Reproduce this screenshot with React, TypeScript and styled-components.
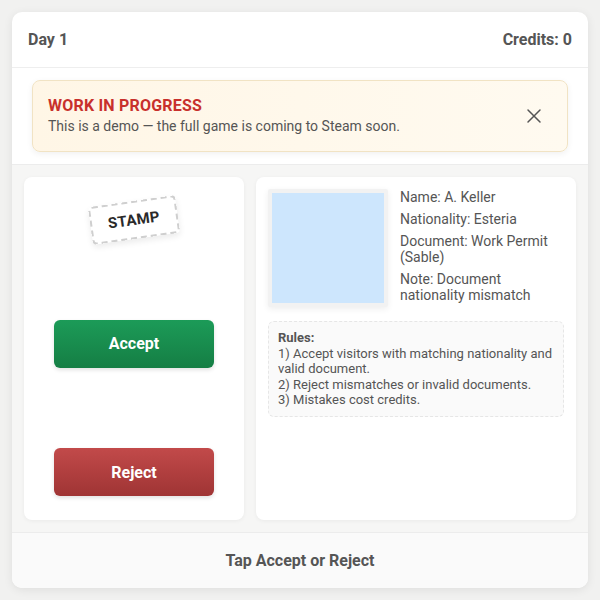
import React from "react";
import styled, { createGlobalStyle } from "styled-components";

const GlobalStyle = createGlobalStyle`
  html, body {
    margin: 0;
    padding: 0;
    background: #f1f1f0;
    font-family: Roboto, "Liberation Sans", Arial, sans-serif;
    color: #555;
  }
  * {
    box-sizing: border-box;
  }
`;

const Page = styled.div`
  width: 600px;
  height: 600px;
  padding: 12px;
`;

const Card = styled.div`
  height: 576px;
  display: flex;
  flex-direction: column;
  background: #fff;
  border-radius: 10px;
  box-shadow: 0 2px 10px rgba(0, 0, 0, 0.08);
  overflow: hidden;
`;

const Header = styled.header`
  height: 56px;
  padding: 0 16px;
  display: flex;
  align-items: center;
  justify-content: space-between;
  border-bottom: 1px solid #eeeeee;
  font-size: 16px;
  font-weight: 700;
  color: #555;
`;

const NoticeArea = styled.div`
  padding: 12px 20px;
  border-bottom: 1px solid #ececec;
`;

const Banner = styled.div`
  display: flex;
  align-items: center;
  justify-content: space-between;
  padding: 15px 25px 15px 15px;
  background: linear-gradient(90deg, #fff6e6, #fffaf0);
  border: 1px solid #f1e3c4;
  border-radius: 8px;
  box-shadow: 0 2px 6px rgba(0, 0, 0, 0.06);
`;

const BannerTitle = styled.div`
  font-size: 16px;
  font-weight: 700;
  color: #c8302c;
  letter-spacing: 0.2px;
  line-height: 20px;
`;

const BannerText = styled.div`
  font-size: 14px;
  line-height: 20px;
  color: #555;
`;

const CloseButton = styled.button`
  border: none;
  background: none;
  padding: 0;
  display: flex;
  cursor: pointer;
`;

const Main = styled.main`
  flex: 1;
  display: grid;
  grid-template-columns: 220px 1fr;
  gap: 12px;
  padding: 12px;
  background: #f6f6f5;
`;

const Panel = styled.section`
  background: #fff;
  border-radius: 8px;
  box-shadow: 0 1px 4px rgba(0, 0, 0, 0.05);
`;

const ActionPanel = styled(Panel)`
  padding: 24px 30px;
  display: flex;
  flex-direction: column;
  align-items: center;
  justify-content: space-between;
`;

const Stamp = styled.div`
  width: 88px;
  height: 38px;
  display: flex;
  align-items: center;
  justify-content: center;
  border: 2px dashed #cfcfcf;
  border-radius: 4px;
  transform: rotate(-8deg);
  font-size: 15px;
  font-weight: 700;
  color: #2a2a2a;
  letter-spacing: 0.3px;
  box-shadow: 0 3px 6px rgba(0, 0, 0, 0.08);
  background: #fff;
`;

const ActionButton = styled.button<{ $tone: "accept" | "reject" }>`
  width: 160px;
  height: 48px;
  border: none;
  border-radius: 6px;
  color: #fff;
  font-family: inherit;
  font-size: 16px;
  font-weight: 700;
  cursor: pointer;
  background: ${(p) =>
    p.$tone === "accept"
      ? "linear-gradient(180deg, #1c9b58, #157e44)"
      : "linear-gradient(180deg, #c24a4a, #9f3434)"};
  box-shadow: 0 2px 4px rgba(0, 0, 0, 0.12);
`;

const InfoPanel = styled(Panel)`
  padding: 12px;
`;

const Visitor = styled.div`
  display: flex;
  gap: 12px;
`;

const Photo = styled.div`
  flex: none;
  width: 120px;
  height: 118px;
  border: 4px solid #f2f2f2;
  background: #cde6fd;
  border-radius: 2px;
  box-shadow: 0 2px 6px rgba(0, 0, 0, 0.07);
`;

const Details = styled.div`
  font-size: 14px;
  line-height: 16px;
  color: #555;
`;

const Field = styled.div`
  margin-bottom: 6px;
`;

const Rules = styled.div`
  margin-top: 12px;
  padding: 8px 9px;
  background: #fafafa;
  border: 1px dashed #e6e6e6;
  border-radius: 6px;
  font-size: 13px;
  line-height: 15.6px;
  color: #555;
`;

const RulesTitle = styled.div`
  font-weight: 700;
`;

const Footer = styled.footer`
  height: 56px;
  display: flex;
  align-items: center;
  justify-content: center;
  border-top: 1px solid #ececec;
  background: #fafafa;
  font-size: 16px;
  font-weight: 700;
  color: #555;
`;

const CloseIcon = () => (
  <svg width="16" height="16" viewBox="0 0 16 16" fill="none">
    <path d="M2 2L14 14M14 2L2 14" stroke="#555" strokeWidth="1.5" strokeLinecap="round" />
  </svg>
);

const visitor = [
  "Name: A. Keller",
  "Nationality: Esteria",
  "Document: Work Permit (Sable)",
  "Note: Document nationality mismatch",
];

const rules = [
  "1) Accept visitors with matching nationality and valid document.",
  "2) Reject mismatches or invalid documents.",
  "3) Mistakes cost credits.",
];

export default function App() {
  return (
    <>
      <GlobalStyle />
      <Page>
        <Card>
          <Header>
            <span>Day 1</span>
            <span>Credits: 0</span>
          </Header>
          <NoticeArea>
            <Banner>
              <div>
                <BannerTitle>WORK IN PROGRESS</BannerTitle>
                <BannerText>This is a demo — the full game is coming to Steam soon.</BannerText>
              </div>
              <CloseButton aria-label="Close">
                <CloseIcon />
              </CloseButton>
            </Banner>
          </NoticeArea>
          <Main>
            <ActionPanel>
              <Stamp>STAMP</Stamp>
              <ActionButton $tone="accept">Accept</ActionButton>
              <ActionButton $tone="reject">Reject</ActionButton>
            </ActionPanel>
            <InfoPanel>
              <Visitor>
                <Photo />
                <Details>
                  {visitor.map((line) => (
                    <Field key={line}>{line}</Field>
                  ))}
                </Details>
              </Visitor>
              <Rules>
                <RulesTitle>Rules:</RulesTitle>
                {rules.map((r) => (
                  <div key={r}>{r}</div>
                ))}
              </Rules>
            </InfoPanel>
          </Main>
          <Footer>Tap Accept or Reject</Footer>
        </Card>
      </Page>
    </>
  );
}
